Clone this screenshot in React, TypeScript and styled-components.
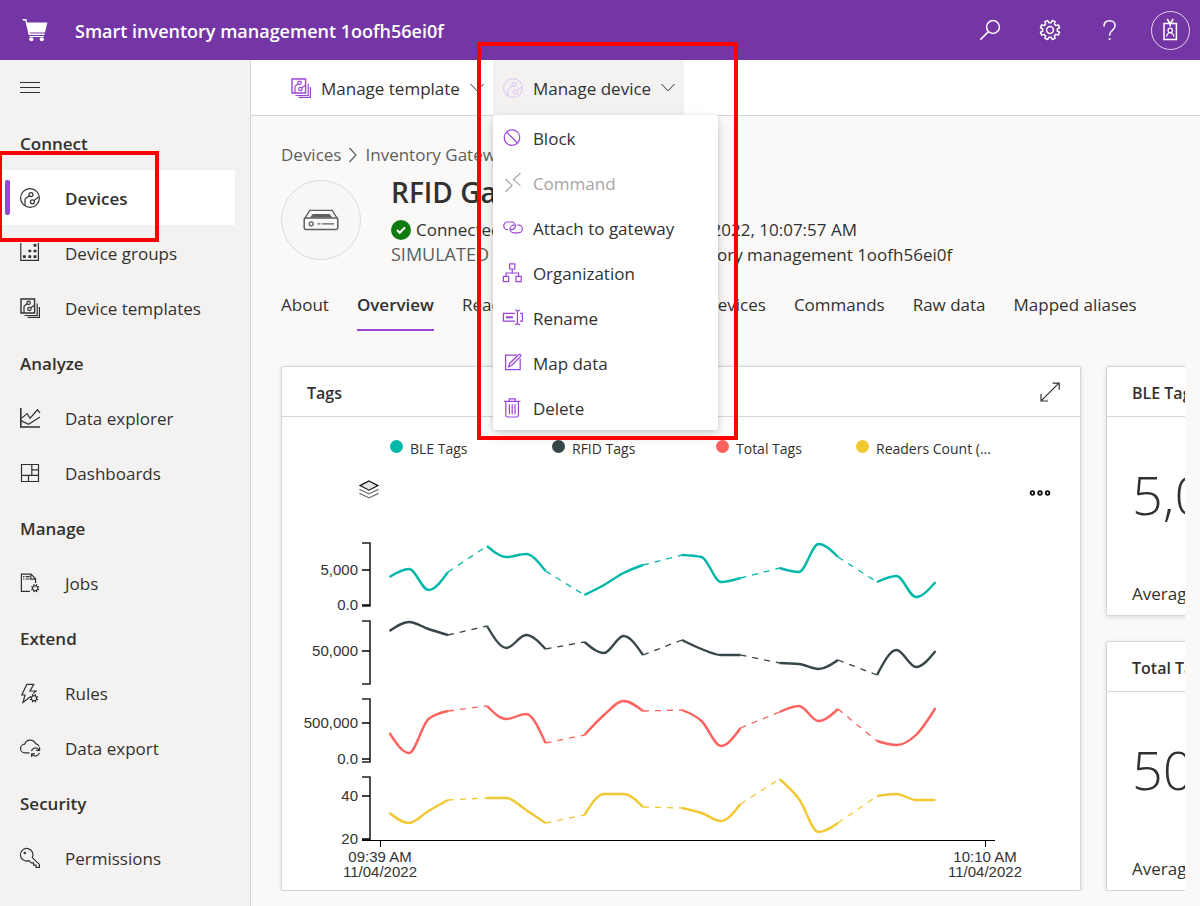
import React from "react";
import styled, { createGlobalStyle, css } from "styled-components";

const color = {
  brand: "#7536a5",
  accent: "#9b44db",
  text: "#323130",
  subtle: "#605e5c",
  line: "#d6d6d8",
  nav: "#f3f2f1",
  canvas: "#faf9f8",
  callout: "#ff0000",
};

const GlobalStyle = createGlobalStyle`
  *, *::before, *::after { box-sizing: border-box; }
  body {
    margin: 0;
    font-family: "Open Sans", "Noto Sans", sans-serif;
    font-size: 17px;
    font-weight: 400;
    line-height: 24px;
    color: ${color.text};
    background: ${color.canvas};
  }
  button { font: inherit; color: inherit; background: none; border: 0; padding: 0; cursor: pointer; }
  a { color: inherit; text-decoration: none; }
  h1, h2, h3, p, ul, ol { margin: 0; padding: 0; font: inherit; list-style: none; }
`;

/* ---------- icons ---------- */

const Glyph = styled.svg<{ $size?: number }>`
  display: block;
  flex: none;
  width: ${(p) => p.$size ?? 20}px;
  height: ${(p) => p.$size ?? 20}px;
  fill: none;
  stroke: currentColor;
  stroke-width: 1.2;
  overflow: visible;
`;

function gearPath(cx: number, cy: number, outer: number, inner: number, teeth = 8) {
  const step = (Math.PI * 2) / teeth;
  const at = (r: number, a: number) => `${(cx + r * Math.cos(a)).toFixed(2)} ${(cy + r * Math.sin(a)).toFixed(2)}`;
  const points: string[] = [];
  for (let i = 0; i < teeth; i++) {
    const a = (i + 0.5) * step;
    points.push(at(inner, a - step * 0.3), at(outer, a - step * 0.2), at(outer, a + step * 0.2), at(inner, a + step * 0.3));
  }
  return `M${points.join("L")}Z`;
}

const DeviceIcon = () => (
  <Glyph viewBox="0 0 20 20">
    <circle cx="10" cy="10" r="9.4" />
    <circle cx="11" cy="6.6" r="2" />
    <circle cx="12.4" cy="13.8" r="2" />
    <path d="M9.4 7.8 5.6 10.6Q5 11 5 12v6M14 12.6l4.8-3.8" />
  </Glyph>
);

const TemplateIcon = () => (
  <Glyph viewBox="0 0 20 20">
    <path d="M1 1h13.6v14H1z" strokeWidth="1.4" />
    <circle cx="8.6" cy="4.8" r="1.7" />
    <circle cx="9.4" cy="11" r="1.7" />
    <path d="M7.2 5.8 4.6 7.8Q4 8.2 4 9v6M10.8 9.8l3.6-2.6M17.2 5.5v12H4.5M19.4 9v10.4H7.5" />
  </Glyph>
);

const GroupsIcon = () => (
  <Glyph viewBox="0 0 20 20">
    <path d="M.8 0v17.4h17.6V0" />
    <path d="M3 13.6h2.8M8.4 13.6h2.8M13.6 13.6h2.8M8.4 8h2.8M13.6 8h2.8M13.6 2.4h2.8" strokeWidth="2.6" />
  </Glyph>
);

const ExplorerIcon = () => (
  <Glyph viewBox="0 0 20 20">
    <path d="M.8 0v19H20" strokeWidth="1.6" />
    <path d="m1 10.6 6.2-5 2.8 4.6 7.6-8.4L20 5M1 12.6l7.6 3.6L20 9" />
  </Glyph>
);

const DashboardIcon = () => (
  <Glyph viewBox="0 0 20 20">
    <path d="M1.5 1.5h17v17h-17zM11.8 1.5v10.8M1.5 12.3h17M11.8 6.8h6.7M8.5 12.3v6.2" />
  </Glyph>
);

const JobsIcon = () => (
  <Glyph viewBox="0 0 20 20">
    <path d="M10 18.3H1.4V1.2H11l4.6 4.6V10M10.8 1.4v4.7h4.6" />
    <path d="M3 3.6h1.4M5.6 3.6h4M3 6h1.4M5.6 6h4" />
    <path d={gearPath(15.2, 15.2, 4.2, 3)} fill="currentColor" stroke="none" />
    <circle cx="15.2" cy="15.2" r="1.9" fill={color.nav} stroke="none" />
  </Glyph>
);

const RulesIcon = () => (
  <Glyph viewBox="0 0 20 20">
    <path d="M10 14 3 19.5l2-7.5H1.8L6.8 1.4h7L10 8h6l-3 2.6" />
    <path d={gearPath(14, 15.2, 4.4, 3.1)} fill="currentColor" stroke="none" />
    <circle cx="14" cy="15.2" r="2" fill={color.nav} stroke="none" />
  </Glyph>
);

const ExportIcon = () => (
  <Glyph viewBox="0 0 20 20">
    <path d="M9.5 14.8H5a4.3 4.3 0 0 1-.3-8.6 5.8 5.8 0 0 1 10.8-.6 4.6 4.6 0 0 1 3.6 2.6" />
    <path d="M11.4 13.2a4.2 4.2 0 0 1 7.4-1.6M19.6 9v3.4h-3.4M19.4 14.8a4.2 4.2 0 0 1-7.2 1.8M11.6 19v-3.2h3.4" />
  </Glyph>
);

const KeyIcon = () => (
  <Glyph viewBox="0 0 20 20">
    <path d="M12.3 9.6 19.4 16.4v3h-3.4v-2.2h-2.4v-2.4h-2.4l-2.2-2.2A6.3 6.3 0 1 1 12.3 9.6Z" />
    <circle cx="4.8" cy="5" r="1.2" fill="currentColor" stroke="none" />
  </Glyph>
);

const BlockIcon = () => (
  <Glyph viewBox="0 0 20 20">
    <circle cx="9" cy="9.6" r="7.8" />
    <path d="m3.6 4.2 10.8 10.8" />
  </Glyph>
);

const CommandIcon = () => (
  <Glyph viewBox="0 0 20 20">
    <path d="m2.4 6 6.6 6.4-6.6 6.4M17.4.2l-7 6.4 7 6" />
  </Glyph>
);

const AttachIcon = () => (
  <Glyph viewBox="0 0 20 20">
    <path d="M5 11.6A3.8 3.8 0 0 1 4.2 4h4.4a3.8 3.8 0 0 1 0 7.6H7.4" />
    <path d="M14.4 7.2h1.2a3.8 3.8 0 0 1 0 7.6H10.8a3.8 3.8 0 0 1 0-7.6h1" />
  </Glyph>
);

const OrganizationIcon = () => (
  <Glyph viewBox="0 0 20 20">
    <path d="M6.6.8h5.2V6H6.6zM.4 13.4h5.2v5.2H.4zM13 13.4h5.2v5.2H13zM9.2 6v4M3 13.4V10h12.6v3.4" />
  </Glyph>
);

const RenameIcon = () => (
  <Glyph viewBox="0 0 20 20">
    <path d="M12 5.4H.4v7.8H12M17 5.4h2.4v7.8H17M11.8 2q2.6 0 2.6 1.8v11q0 1.8-2.6 1.8M17.2 2q-2.6 0-2.6 1.8M14.6 14.8q0 1.8 2.6 1.8" />
    <path d="M3 9.3h7" strokeWidth="2" />
  </Glyph>
);

const MapIcon = () => (
  <Glyph viewBox="0 0 20 20">
    <path d="M14 2.2H2.6v14.4h14.6V5.6" />
    <path d="M5.6 13.8 6.8 10.2l9-8.6q1-.6 1.8.2.6.8 0 1.6L8.8 12.2z" />
  </Glyph>
);

const DeleteIcon = () => (
  <Glyph viewBox="0 0 20 20">
    <path d="M1 3.4h16.4M6.2 3.2V.8h6v2.4M2.8 3.6v13.6q0 1.8 1.8 1.8h9q1.8 0 1.8-1.8V3.6M6.4 6.2v10M9.2 6.2v10M12 6.2v10" />
  </Glyph>
);

const ChevronIcon = () => (
  <Glyph viewBox="0 0 14 14" $size={14}>
    <path d="m.5 3 6.5 6.8L13.5 3" strokeWidth="1" />
  </Glyph>
);

/* ---------- app bar ---------- */

const Page = styled.div`
  display: flex;
  flex-direction: column;
  height: 100vh;
`;

const AppBar = styled.header`
  display: flex;
  flex: none;
  align-items: center;
  height: 60px;
  padding-left: 22px;
  gap: 28px;
  color: #fff;
  background: ${color.brand};
`;

const AppTitle = styled.h1`
  flex: 1;
  min-width: 0;
  padding-top: 2px;
  white-space: nowrap;
  font-size: 18px;
  font-weight: 600;
`;

const AppActions = styled.div`
  display: flex;
`;

const AppButton = styled.button`
  display: grid;
  place-items: center;
  width: 60px;
  height: 60px;
`;

const Avatar = styled.span`
  display: grid;
  place-items: center;
  width: 39px;
  height: 39px;
  border: 1px solid #e3d5ee;
  border-radius: 50%;
`;

/* ---------- navigation ---------- */

const Body = styled.div`
  display: flex;
  flex: 1;
  min-height: 0;
`;

const Sidebar = styled.nav`
  flex: none;
  width: 251px;
  background: ${color.nav};
  border-right: 1px solid ${color.line};
`;

const MenuToggle = styled.button`
  display: flex;
  align-items: center;
  height: 55px;
  padding-left: 20px;
`;

const NavHeading = styled.h2`
  height: 55px;
  padding: 1px 20px 0;
  line-height: 56px;
  font-size: 17px;
  font-weight: 600;
`;

const NavItem = styled.li`
  position: relative;
  margin-right: 15px;
`;

const Label = styled.span`
  padding-top: 2px;
`;

const NavLink = styled.a<{ $active?: boolean }>`
  display: flex;
  align-items: center;
  gap: 25px;
  height: 55px;
  padding-left: 20px;
  ${(p) =>
    p.$active &&
    css`
      font-weight: 600;
      background: #fff;
      &::before {
        content: "";
        position: absolute;
        left: 5px;
        top: 10px;
        width: 5px;
        height: 35px;
        border-radius: 2px;
        background: ${color.accent};
      }
    `}
`;

const Callout = styled.div<{ $inset: string }>`
  position: absolute;
  inset: ${(p) => p.$inset};
  z-index: 5;
  border: 4px solid ${color.callout};
  pointer-events: none;
`;

/* ---------- command bar ---------- */

const Main = styled.main`
  display: flex;
  flex: 1;
  flex-direction: column;
  min-width: 0;
`;

const CommandBar = styled.div`
  position: relative;
  z-index: 2;
  display: flex;
  flex: none;
  height: 56px;
  padding-left: 30px;
  background: #fff;
  border-bottom: 1px solid ${color.line};
`;

const CommandButton = styled.button<{ $open?: boolean }>`
  display: flex;
  align-items: center;
  gap: 10px;
  height: 55px;
  padding: 0 9px 0 10px;
  white-space: nowrap;
  background: ${(p) => (p.$open ? color.nav : "transparent")};
`;

const Tint = styled.span<{ $faded?: boolean }>`
  color: ${(p) => (p.$faded ? "#e4cdf5" : color.accent)};
`;

const MenuAnchor = styled.div`
  position: relative;
`;

const Menu = styled.ul`
  position: absolute;
  top: 55px;
  left: 0;
  width: 225px;
  background: #fff;
  border-radius: 2px;
  box-shadow: 0 6px 14px rgba(0, 0, 0, 0.14), 0 1px 4px rgba(0, 0, 0, 0.12);
`;

const MenuItem = styled.button`
  display: flex;
  align-items: center;
  gap: 10px;
  width: 100%;
  height: 45px;
  padding: 0 10px;
  &:disabled { color: #a8a6a4; }
  &:disabled ${Tint} { color: inherit; }
`;

/* ---------- device header ---------- */

const Content = styled.div`
  flex: 1;
  min-height: 0;
  margin: 0 15px 15px 0;
  padding: 27px 0 0 30px;
  overflow: hidden;
`;

const Breadcrumb = styled.ol`
  display: flex;
  gap: 4px;
  color: ${color.subtle};
  li { display: flex; align-items: center; gap: 4px; }
`;

const Profile = styled.section`
  display: flex;
  align-items: center;
  gap: 30px;
  margin: 5px 0 19px;
`;

const DeviceImage = styled.div`
  display: grid;
  flex: none;
  place-items: center;
  width: 80px;
  height: 80px;
  color: ${color.subtle};
  background: #f7f7f7;
  border: 1px solid #dcdcdc;
  border-radius: 50%;
`;

const DeviceName = styled.h2`
  margin-bottom: 5px;
  line-height: 40px;
  font-size: 28px;
  font-weight: 600;
`;

const FactRow = styled.div`
  display: flex;
  gap: 16px;
  line-height: 25px;
  white-space: nowrap;
`;

const Fact = styled.span<{ $subtle?: boolean }>`
  display: flex;
  align-items: center;
  gap: 5px;
  font-size: ${(p) => (p.$subtle ? 18 : 17)}px;
  color: ${(p) => (p.$subtle ? color.subtle : color.text)};
`;

const Tabs = styled.nav`
  display: flex;
  gap: 28px;
  margin-bottom: 35px;
  white-space: nowrap;
`;

const Tab = styled.a<{ $active?: boolean }>`
  padding: 7px 0 12px;
  border-bottom: 2px solid ${(p) => (p.$active ? color.accent : "transparent")};
  font-weight: ${(p) => (p.$active ? 600 : 400)};
`;

/* ---------- tiles ---------- */

const Tiles = styled.div`
  display: grid;
  grid-template-columns: 800px 250px;
  grid-template-rows: 250px 250px;
  gap: 25px;
`;

const Tile = styled.article<{ $tall?: boolean }>`
  display: flex;
  flex-direction: column;
  grid-row: ${(p) => (p.$tall ? "span 2" : "auto")};
  background: #fff;
  border: 1px solid ${color.line};
  border-radius: 2px;
  box-shadow: 0 1px 4px rgba(0, 0, 0, 0.13);
`;

const TileHeader = styled.header`
  display: flex;
  align-items: center;
  justify-content: space-between;
  height: 50px;
  padding: 3px 20px 0 25px;
  border-bottom: 1px solid ${color.line};
`;

const TileTitle = styled.h3`
  font-size: 16px;
  font-weight: 600;
  white-space: nowrap;
`;

const Legend = styled.ul`
  display: grid;
  grid-template-columns: 162px 164px 140px auto;
  padding: 20px 0 0 108px;
  font-size: 14px;
`;

const LegendItem = styled.li<{ $color: string }>`
  display: flex;
  align-items: center;
  gap: 7px;
  &::before {
    content: "";
    width: 13px;
    height: 13px;
    margin-bottom: 5px;
    border-radius: 50%;
    background: ${(p) => p.$color};
  }
`;

const ChartTools = styled.div`
  display: flex;
  justify-content: space-between;
  padding: 18px 29px 23px 76px;
`;

const Chart = styled.svg`
  display: block;
  width: 100%;
  height: 366px;
  font-family: "Liberation Sans", Arial, sans-serif;
  font-size: 15px;
  fill: #333;
`;

const Stat = styled.div`
  display: flex;
  flex: 1;
  flex-direction: column;
  justify-content: space-between;
  padding: 42px 25px 9px;
`;

const StatValue = styled.strong`
  line-height: 70px;
  font-size: 54px;
  font-weight: 300;
`;

/* ---------- chart ---------- */

type Series = {
  name: string;
  color: string;
  top: number;
  ticks: { y: number; label: string }[];
  groups: number[][];
};

const series: Series[] = [
  {
    name: "BLE Tags",
    color: "#00b8aa",
    top: 19,
    ticks: [{ y: 46, label: "5,000" }, { y: 81, label: "0.0" }],
    groups: [[53, 45, 66, 48], [22, 33, 30, 47], [71, 61, 49, 41], [31, 33, 58, 54], [44, 48, 20, 33], [58, 52, 73, 58]],
  },
  {
    name: "RFID Tags",
    color: "#374649",
    top: 97,
    ticks: [{ y: 127, label: "50,000" }],
    groups: [[107, 98, 105, 111], [102, 124, 111, 125], [118, 129, 112, 131], [116, 125, 131, 131], [139, 140, 145, 136], [151, 126, 143, 127]],
  },
  {
    name: "Total Tags",
    color: "#fd625e",
    top: 175,
    ticks: [{ y: 199, label: "500,000" }, { y: 235, label: "0.0" }],
    groups: [[209, 229, 195, 187], [182, 195, 190, 219], [211, 191, 177, 187], [186, 197, 222, 204], [188, 182, 197, 185], [217, 221, 211, 184]],
  },
  {
    name: "Readers Count (...",
    color: "#f2c832",
    top: 253,
    ticks: [{ y: 272, label: "40" }, { y: 315, label: "20" }],
    groups: [[289, 299, 287, 276], [274, 274, 286, 299], [291, 270, 270, 283], [284, 289, 297, 280], [255, 275, 308, 299], [272, 270, 276, 276]],
  },
];

const AXIS_X = 88;
const FIRST_X = 107.5;
const STEP = 19.5;

type Point = [number, number];

const groupPoints = (values: number[], group: number): Point[] =>
  values.map((y, i) => [FIRST_X + (group * 5 + i) * STEP, y]);

/* Cubic path that keeps each segment monotone between its samples. */
function smoothPath(points: Point[]) {
  const slopes = points.slice(1).map(([x, y], i) => (y - points[i][1]) / (x - points[i][0]));
  const tangents = points.map((_, i) => {
    if (i === 0 || i === points.length - 1) return null;
    const a = slopes[i - 1];
    const b = slopes[i];
    if (a * b <= 0) return 0;
    return Math.sign(a) * Math.min(Math.abs(a), Math.abs(b), Math.abs(a + b) / 4) * 2;
  });
  const m = tangents.map((t, i) => {
    if (t !== null) return t;
    return i === 0 ? (3 * slopes[0] - (tangents[1] ?? 0)) / 2 : (3 * slopes[i - 1] - (tangents[i - 1] ?? 0)) / 2;
  });
  return points.slice(1).reduce((d, [x, y], i) => {
    const [px, py] = points[i];
    const h = (x - px) / 3;
    return `${d}C${px + h} ${py + m[i] * h} ${x - h} ${y - m[i + 1] * h} ${x} ${y}`;
  }, `M${points[0].join(" ")}`);
}

const SeriesPanel = ({ data }: { data: Series }) => {
  const groups = data.groups.map(groupPoints);
  return (
    <g>
      <path d={`M80 ${data.top}h${AXIS_X - 80}v63h-8`} fill="none" stroke="#222" strokeWidth="1.6" />
      {data.ticks.map((tick) => (
        <g key={tick.label}>
          <path d={`M80 ${tick.y}h8`} stroke="#000" strokeWidth="1.5" />
          <text x="76" y={tick.y + 5} textAnchor="end">{tick.label}</text>
        </g>
      ))}
      <g fill="none" stroke={data.color}>
        {groups.map((points, i) => (
          <path key={i} d={smoothPath(points)} strokeWidth="2.4" />
        ))}
        {groups.slice(1).map((points, i) => (
          <path key={i} d={`M${groups[i][3].join(" ")}L${points[0].join(" ")}`} strokeWidth="1.3" strokeDasharray="6 6" />
        ))}
      </g>
    </g>
  );
};

const TimeLabel = ({ x, time }: { x: number; time: string }) => (
  <g textAnchor="middle">
    <path d={`M${x + 0.5} 316v7`} stroke="#000" />
    <text x={x} y="338">{time}</text>
    <text x={x} y="353">11/04/2022</text>
  </g>
);

/* ---------- page data ---------- */

const navigation = [
  {
    heading: "Connect",
    items: [
      { label: "Devices", icon: <DeviceIcon />, active: true },
      { label: "Device groups", icon: <GroupsIcon /> },
      { label: "Device templates", icon: <TemplateIcon /> },
    ],
  },
  {
    heading: "Analyze",
    items: [
      { label: "Data explorer", icon: <ExplorerIcon /> },
      { label: "Dashboards", icon: <DashboardIcon /> },
    ],
  },
  { heading: "Manage", items: [{ label: "Jobs", icon: <JobsIcon /> }] },
  {
    heading: "Extend",
    items: [
      { label: "Rules", icon: <RulesIcon /> },
      { label: "Data export", icon: <ExportIcon /> },
    ],
  },
  { heading: "Security", items: [{ label: "Permissions", icon: <KeyIcon /> }] },
] as { heading: string; items: { label: string; icon: React.ReactNode; active?: boolean }[] }[];

const deviceActions = [
  { label: "Block", icon: <BlockIcon /> },
  { label: "Command", icon: <CommandIcon />, disabled: true },
  { label: "Attach to gateway", icon: <AttachIcon /> },
  { label: "Organization", icon: <OrganizationIcon /> },
  { label: "Rename", icon: <RenameIcon /> },
  { label: "Map data", icon: <MapIcon /> },
  { label: "Delete", icon: <DeleteIcon /> },
];

const tabs = ["About", "Overview", "Readers", "Files", "Connected devices", "Commands", "Raw data", "Mapped aliases"];

const stats = [
  { title: "BLE Tags", value: "5,016", caption: "Average" },
  { title: "Total Tags", value: "504,210", caption: "Average" },
];

export default function App() {
  return (
    <Page>
      <GlobalStyle />
      <AppBar>
        <Glyph viewBox="0 0 24 24" $size={25} aria-hidden>
          <path d="M.6 1.6h3l3.4 14h14.6" strokeWidth="1.4" />
          <path d="M4.4 4.2h20L22 13.8H6.8z" fill="currentColor" stroke="none" />
          <circle cx="9" cy="20.4" r="2" fill="currentColor" stroke="none" />
          <circle cx="19" cy="20.4" r="2" fill="currentColor" stroke="none" />
          <path d="M7 17.8h14" strokeWidth="1" />
        </Glyph>
        <AppTitle>Smart inventory management 1oofh56ei0f</AppTitle>
        <AppActions>
          <AppButton aria-label="Search">
            <Glyph viewBox="0 0 20 20">
              <circle cx="13" cy="7" r="6.4" strokeWidth="1.5" />
              <path d="m8.4 11.6-8 8" strokeWidth="1.5" />
            </Glyph>
          </AppButton>
          <AppButton aria-label="Settings">
            <Glyph viewBox="0 0 20 20">
              <path d={gearPath(10, 10, 9.8, 7.4)} strokeWidth="1.5" strokeLinejoin="round" />
              <circle cx="10" cy="10" r="3.4" strokeWidth="1.5" />
            </Glyph>
          </AppButton>
          <AppButton aria-label="Help">
            <Glyph viewBox="0 0 20 20">
              <path d="M4 6.4C4 2.8 6.4.7 9.6.7s5.5 2 5.5 5c0 4.6-5.5 4.6-5.5 9.2v.8" strokeWidth="1.5" />
              <circle cx="9.6" cy="19.2" r="1.1" fill="currentColor" stroke="none" />
            </Glyph>
          </AppButton>
          <AppButton aria-label="Account">
            <Avatar>
              <Glyph viewBox="0 0 20 22" $size={22}>
                <path d="M4 4.6h12.4v16H4zM7.2 0l3 5 3-5M10.2 4v3.4" strokeWidth="1.5" />
                <circle cx="10.2" cy="11.4" r="2.2" />
                <path d="M6.6 17.6q.6-4 3.6-4t3.6 4" />
              </Glyph>
            </Avatar>
          </AppButton>
        </AppActions>
      </AppBar>

      <Body>
        <Sidebar aria-label="Primary">
          <MenuToggle aria-label="Toggle navigation">
            <Glyph viewBox="0 0 20 20">
              <path d="M0 4.5h20M0 9.5h20M0 14.5h20" strokeWidth="1" />
            </Glyph>
          </MenuToggle>
          {navigation.map((section) => (
            <section key={section.heading}>
              <NavHeading>{section.heading}</NavHeading>
              <ul>
                {section.items.map((item) => (
                  <NavItem key={item.label}>
                    <NavLink href="#" $active={item.active}>
                      {item.icon}
                      <Label>{item.label}</Label>
                    </NavLink>
                    {item.active && <Callout $inset="-19px 76px -17px -2px" />}
                  </NavItem>
                ))}
              </ul>
            </section>
          ))}
        </Sidebar>

        <Main>
          <CommandBar>
            <CommandButton>
              <Tint><TemplateIcon /></Tint>
              <Label>Manage template</Label>
              <ChevronIcon />
            </CommandButton>
            <MenuAnchor>
              <CommandButton $open aria-haspopup="menu" aria-expanded>
                <Tint $faded><DeviceIcon /></Tint>
                <Label>Manage device</Label>
                <ChevronIcon />
              </CommandButton>
              <Menu role="menu">
                {deviceActions.map((action) => (
                  <li key={action.label} role="none">
                    <MenuItem role="menuitem" disabled={action.disabled}>
                      <Tint>{action.icon}</Tint>
                      <Label>{action.label}</Label>
                    </MenuItem>
                  </li>
                ))}
                <Callout $inset="-73px -20px -10px -16px" />
              </Menu>
            </MenuAnchor>
          </CommandBar>

          <Content>
            <Breadcrumb>
              <li>
                <a href="#">Devices</a>
                <Glyph viewBox="0 0 16 16" $size={16}>
                  <path d="m4.5 1 6.5 7-6.5 7" />
                </Glyph>
              </li>
              <li><a href="#">Inventory Gateway</a></li>
            </Breadcrumb>

            <Profile>
              <DeviceImage>
                <Glyph viewBox="0 0 36 36" $size={36}>
                  <rect x="1.2" y="16" width="33.6" height="11.4" rx="1.6" strokeWidth="1.5" />
                  <path d="M1.6 16.6 6.8 8.4h22.4l5.2 8.2" strokeWidth="1.3" />
                  <path d="M9.6 12h16.8l3 3.6H7z" fill="currentColor" stroke="none" />
                  <circle cx="8.2" cy="21.8" r="2" strokeWidth="1.3" />
                  <path d="M14.6 21.8h3M19 21.8h12" strokeWidth="1.3" />
                </Glyph>
              </DeviceImage>
              <div>
                <DeviceName>RFID Gateway</DeviceName>
                <FactRow>
                  <Fact>
                    <Glyph viewBox="0 0 20 20">
                      <circle cx="10" cy="10" r="10" fill="#107c10" stroke="none" />
                      <path d="m6 10 2.8 2.8L14 7.4" stroke="#fff" strokeWidth="2" />
                    </Glyph>
                    Connected
                  </Fact>
                  <Fact>Last data received: 11/4/2022, 10:07:57 AM</Fact>
                </FactRow>
                <FactRow>
                  <Fact $subtle>SIMULATED</Fact>
                  <Fact>Organization: Smart inventory management 1oofh56ei0f</Fact>
                </FactRow>
              </div>
            </Profile>

            <Tabs aria-label="Device views">
              {tabs.map((tab) => (
                <Tab key={tab} href="#" $active={tab === "Overview"}>{tab}</Tab>
              ))}
            </Tabs>

            <Tiles>
              <Tile $tall>
                <TileHeader>
                  <TileTitle>Tags</TileTitle>
                  <button aria-label="Expand">
                    <Glyph viewBox="0 0 20 20">
                      <path d="M1.4 17.6 18.6.4M12.6.2h6.6v6.6M1 11V18h7" />
                    </Glyph>
                  </button>
                </TileHeader>
                <Legend>
                  {series.map((s) => (
                    <LegendItem key={s.name} $color={s.color}>{s.name}</LegendItem>
                  ))}
                </Legend>
                <ChartTools>
                  <button aria-label="Layers">
                    <Glyph viewBox="0 0 22 22" $size={22}>
                      <path d="m1.4 10.4 9.6 4.4 9.6-4.4M1.4 14.4l9.6 4.4 9.6-4.4" stroke="#777" />
                      <path d="M11 2 20 6.6l-9 4.6-9-4.6z" fill="#e4e4e4" stroke="#111" />
                    </Glyph>
                  </button>
                  <button aria-label="More options">
                    <Glyph viewBox="0 0 22 22" $size={22}>
                      <g strokeWidth="1.8" stroke="#111">
                        <circle cx="3.4" cy="14" r="1.8" />
                        <circle cx="11" cy="14" r="1.8" />
                        <circle cx="18.6" cy="14" r="1.8" />
                      </g>
                    </Glyph>
                  </button>
                </ChartTools>
                <Chart viewBox="0 0 798 366" preserveAspectRatio="xMinYMin meet">
                  {series.map((s) => (
                    <SeriesPanel key={s.name} data={s} />
                  ))}
                  <path d="M80 316.5h633" stroke="#000" />
                  <TimeLabel x={98} time="09:39 AM" />
                  <TimeLabel x={703} time="10:10 AM" />
                </Chart>
              </Tile>
              {stats.map((stat) => (
                <Tile key={stat.title}>
                  <TileHeader>
                    <TileTitle>{stat.title}</TileTitle>
                  </TileHeader>
                  <Stat>
                    <StatValue>{stat.value}</StatValue>
                    {stat.caption}
                  </Stat>
                </Tile>
              ))}
            </Tiles>
          </Content>
        </Main>
      </Body>
    </Page>
  );
}
